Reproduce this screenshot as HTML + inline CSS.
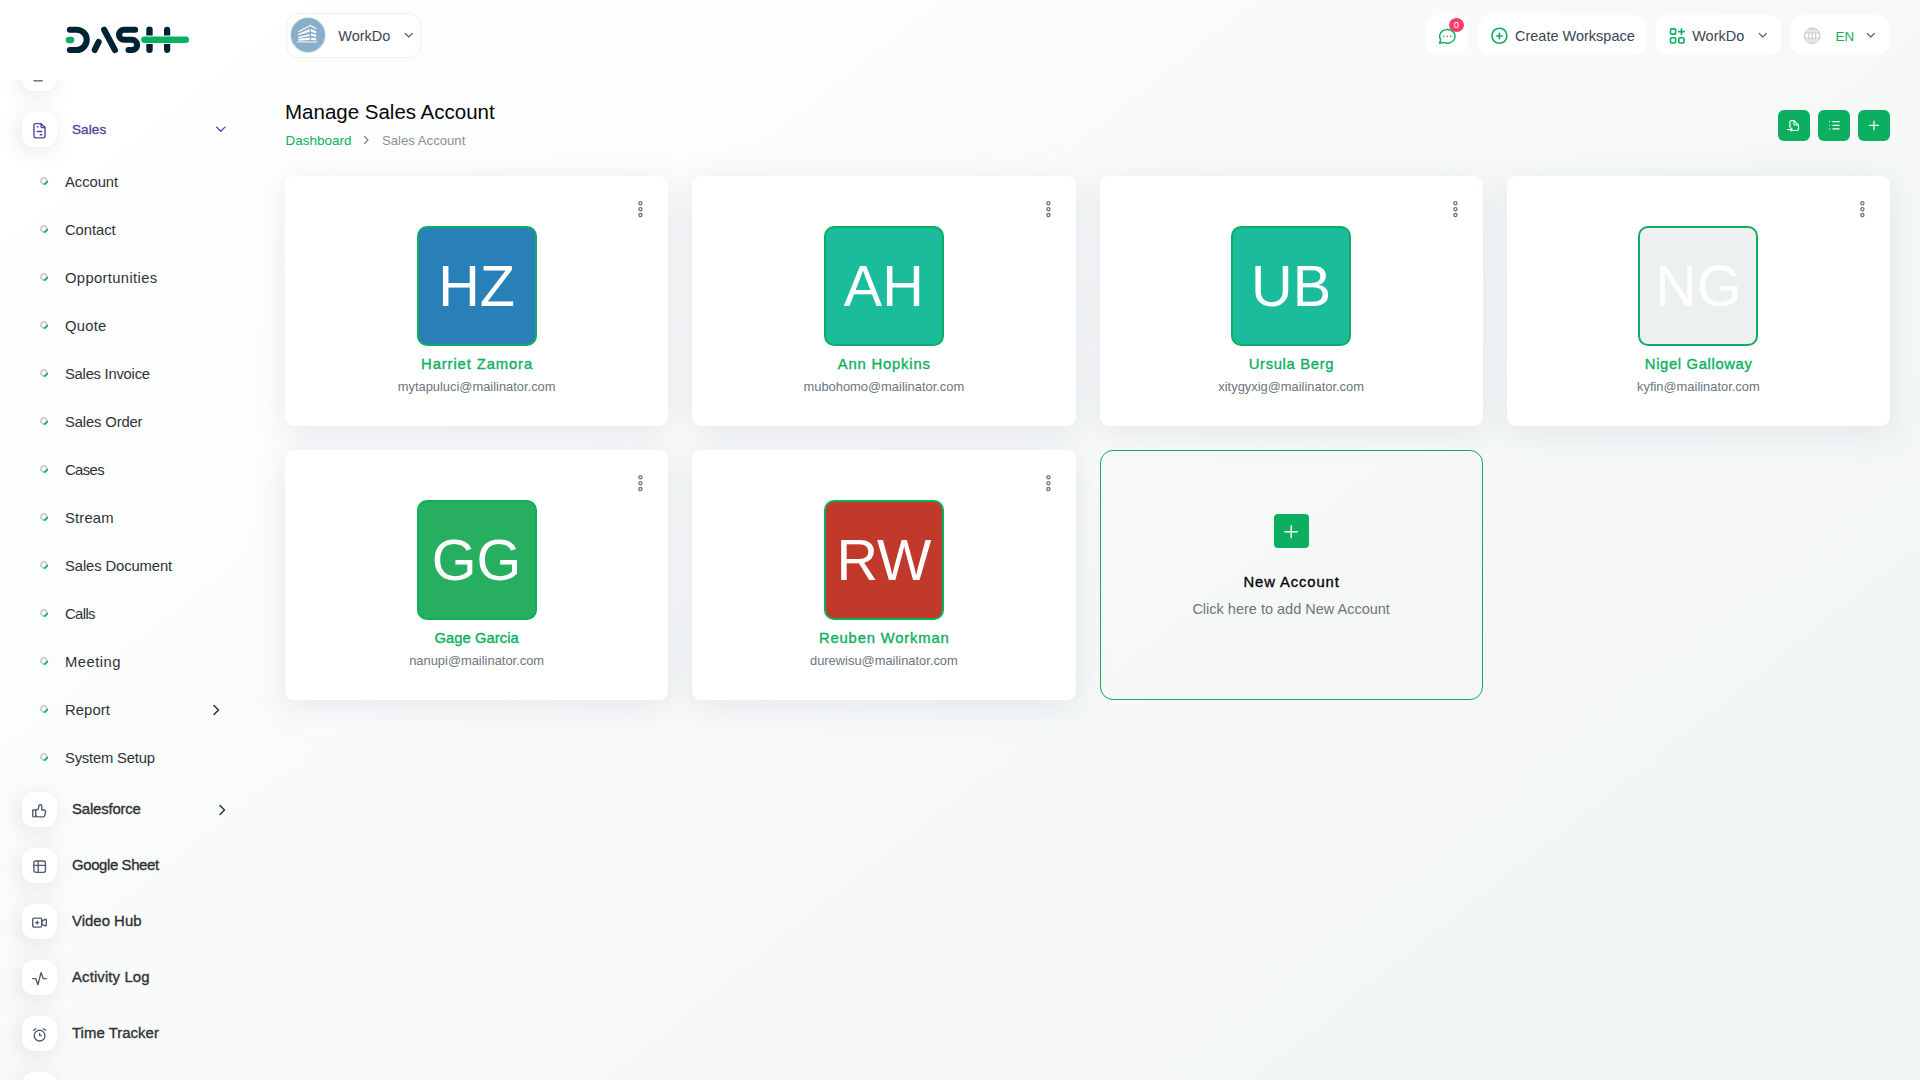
<!DOCTYPE html>
<html><head><meta charset="utf-8">
<style>
*{box-sizing:border-box;margin:0;padding:0}
html,body{width:1920px;height:1080px;overflow:hidden}
body{font-family:"Liberation Sans",sans-serif;color:#293240;position:relative;
background:linear-gradient(141.55deg,rgba(240,244,243,0) 3.46%,#f0f4f3 99.86%);background-color:#fff}
.abs{position:absolute}
.t{position:absolute;white-space:nowrap;line-height:1}
/* sidebar */
.mbox{position:absolute;left:22px;width:35px;height:35px;border-radius:12px;background:#fff;box-shadow:-3px 4px 23px rgba(0,0,0,0.1)}
.mbox svg{position:absolute;left:0;top:0}
.mtxt{position:absolute;left:72px;font-size:14.9px;letter-spacing:0.17px;-webkit-text-stroke:0.35px currentColor;color:#2e3238;white-space:nowrap;line-height:1}
.sub{position:absolute;left:65px;font-size:14.8px;color:#2e3238;white-space:nowrap;line-height:1}
.dot{position:absolute;left:40px;width:8px;height:8px;border-radius:50%;border:2px solid #cbd0d9;border-bottom-color:#0caf60;transform:rotate(-45deg)}
.logo{position:absolute;left:0;top:0;width:280px;height:80px;background:linear-gradient(141.55deg,rgba(240,244,243,0) 3.46%,#f0f4f3 99.86%) fixed,#fff}
/* header */
.hbox{position:absolute;top:15px;height:40px;background:#fff;border-radius:12px}
.htxt{position:absolute;font-size:14.5px;color:#3b4555;white-space:nowrap;line-height:1}
/* cards */
.card{position:absolute;width:383.25px;height:250px;background:#fff;border-radius:9px;box-shadow:0 6px 30px rgba(182,186,203,0.3)}
.av{position:absolute;left:131.6px;top:50px;width:120px;height:120px;border:2px solid #0caf60;border-radius:10px;overflow:hidden}
.av span{position:absolute;left:-2px;top:-2px;width:120px;height:120px;line-height:120px;text-align:center;color:#fff;font-size:57.6px}
.nm{position:absolute;left:0;width:100%;top:180.5px;text-align:center;font-size:14.8px;letter-spacing:0.9px;padding-left:0.9px;-webkit-text-stroke:0.35px currentColor;color:#0caf60;line-height:1;white-space:nowrap}
.em{position:absolute;left:0;width:100%;top:205.4px;text-align:center;font-size:12.9px;color:#6c757d;line-height:1;white-space:nowrap}
.dots{position:absolute;right:22px;top:22px}
.btn{position:absolute;top:110px;width:32px;height:31px;border-radius:6px;background:#0caf60}
.btn svg{position:absolute;left:0;top:0}
</style></head>
<body>

<!-- SIDEBAR -->
<div id="sidebar">
  <div class="mbox" style="top:56px"><svg width="35" height="35"><rect x="11.8" y="10" width="8.6" height="14.85" rx="2.2" fill="none" stroke="#525b69" stroke-width="1.4"/></svg></div>

  <div class="mbox" style="top:112px"><svg width="35" height="35" fill="none" stroke="#51459d" stroke-linecap="round" stroke-linejoin="round"><g transform="translate(8,9.28) scale(0.79)" stroke-width="1.75"><path d="M14 3v4a1 1 0 0 0 1 1h4"/><path d="M17 21h-10a2 2 0 0 1 -2 -2v-14a2 2 0 0 1 2 -2h7l5 5v11a2 2 0 0 1 -2 2z"/><path d="M9 7h1M9 13h6M13 17h2"/></g></svg></div>
  <div class="mtxt" style="top:122.9px;color:#51459d;font-size:13.5px;letter-spacing:0.1px">Sales</div>
  <svg class="abs" style="left:214px;top:124px" width="14" height="10" fill="none" stroke="#51459d" stroke-width="1.3" stroke-linecap="round" stroke-linejoin="round"><path d="M2.6 3.1l4.2 4.2l4.2 -4.2"/></svg>

  <div class="dot" style="top:176.5px"></div><div class="sub" style="top:174.5px;letter-spacing:-0.067px">Account</div>
  <div class="dot" style="top:224.5px"></div><div class="sub" style="top:222.5px;letter-spacing:-0.067px">Contact</div>
  <div class="dot" style="top:272.5px"></div><div class="sub" style="top:270.5px;letter-spacing:0.342px">Opportunities</div>
  <div class="dot" style="top:320.5px"></div><div class="sub" style="top:318.5px;letter-spacing:0.25px">Quote</div>
  <div class="dot" style="top:368.5px"></div><div class="sub" style="top:366.5px;letter-spacing:-0.25px">Sales Invoice</div>
  <div class="dot" style="top:416.5px"></div><div class="sub" style="top:414.5px;letter-spacing:-0.14px">Sales Order</div>
  <div class="dot" style="top:464.5px"></div><div class="sub" style="top:462.5px;letter-spacing:-0.6px">Cases</div>
  <div class="dot" style="top:512.5px"></div><div class="sub" style="top:510.5px;letter-spacing:0.18px">Stream</div>
  <div class="dot" style="top:560.5px"></div><div class="sub" style="top:558.5px;letter-spacing:-0.108px">Sales Document</div>
  <div class="dot" style="top:608.5px"></div><div class="sub" style="top:606.5px;letter-spacing:-0.6px">Calls</div>
  <div class="dot" style="top:656.5px"></div><div class="sub" style="top:654.5px;letter-spacing:0.467px">Meeting</div>
  <div class="dot" style="top:704.5px"></div><div class="sub" style="top:702.5px;letter-spacing:0.08px">Report</div>
  <svg class="abs" style="left:209px;top:703px" width="14" height="14" fill="none" stroke="#293240" stroke-width="1.5" stroke-linecap="round" stroke-linejoin="round"><path d="M5 2.5l4.5 4.5l-4.5 4.5"/></svg>
  <div class="dot" style="top:752.5px"></div><div class="sub" style="top:750.5px;letter-spacing:-0.2px">System Setup</div>

  <div class="mbox" style="top:792px"><svg width="35" height="35" fill="none" stroke="#525b69" stroke-width="1.35" stroke-linecap="round" stroke-linejoin="round"><g transform="translate(17.5,18.8) scale(0.755) translate(-12,-12)" stroke-width="1.8"><path d="M7 11v8a1 1 0 0 1 -1 1h-2a1 1 0 0 1 -1 -1v-7a1 1 0 0 1 1 -1h3a4 4 0 0 0 4 -4v-1a2 2 0 0 1 4 0v5h3a2 2 0 0 1 2 2l-1 5a2 3 0 0 1 -2 2h-7a3 3 0 0 1 -3 -3"/></g></svg></div>
  <div class="mtxt" style="top:802.4px;letter-spacing:-0.167px">Salesforce</div>
  <svg class="abs" style="left:215px;top:803px" width="14" height="14" fill="none" stroke="#293240" stroke-width="1.5" stroke-linecap="round" stroke-linejoin="round"><path d="M5 2.5l4.5 4.5l-4.5 4.5"/></svg>

  <div class="mbox" style="top:848px"><svg width="35" height="35" fill="none" stroke="#525b69" stroke-width="1.35" stroke-linecap="round" stroke-linejoin="round"><rect x="11.85" y="12.95" width="11.6" height="11.4" rx="2"/><path d="M11.85 17.3h11.6M16.2 12.95v11.4"/></svg></div>
  <div class="mtxt" style="top:858.4px;letter-spacing:-0.364px">Google Sheet</div>

  <div class="mbox" style="top:904px"><svg width="35" height="35" fill="none" stroke="#525b69" stroke-linecap="round" stroke-linejoin="round"><g transform="translate(17.5,18.6) scale(0.755) translate(-12,-12)" stroke-width="1.8"><path d="M15 10l4.553 -2.276a1 1 0 0 1 1.447 .894v6.764a1 1 0 0 1 -1.447 .894l-4.553 -2.276v-4z"/><path d="M3 8a2 2 0 0 1 2 -2h8a2 2 0 0 1 2 2v8a2 2 0 0 1 -2 2h-8a2 2 0 0 1 -2 -2z"/><path d="M7 12h4M9 10v4"/></g></svg></div>
  <div class="mtxt" style="top:914.4px;letter-spacing:0.025px">Video Hub</div>

  <div class="mbox" style="top:960px"><svg width="35" height="35" fill="none" stroke="#525b69" stroke-linecap="round" stroke-linejoin="round"><g transform="translate(17.5,18.65) scale(0.755) translate(-12,-12)" stroke-width="1.8"><path d="M3 12h4l3 8l4 -16l3 8h4"/></g></svg></div>
  <div class="mtxt" style="top:970.4px;letter-spacing:0.127px">Activity Log</div>

  <div class="mbox" style="top:1016px"><svg width="35" height="35" fill="none" stroke="#525b69" stroke-linecap="round" stroke-linejoin="round"><g transform="translate(17.6,18.9) scale(0.768) translate(-12,-12)" stroke-width="1.8"><path d="M5 13a7 7 0 1 0 14 0a7 7 0 1 0 -14 0"/><path d="M12 10v3h2M7 4l-2.75 2M17 4l2.75 2"/></g></svg></div>
  <div class="mtxt" style="top:1026.4px;letter-spacing:0.05px">Time Tracker</div>

  <div class="mbox" style="top:1072px"></div>
</div>

<!-- LOGO -->
<div class="logo">
  <svg width="280" height="80">
    <g fill="none" stroke-linecap="round" stroke-linejoin="round">
      <path d="M68.9 40h2.2" stroke="#0caf60" stroke-width="6.3"/>
      <path d="M69.9 29.7H76.6A10.15 10.15 0 0 1 76.6 50H69.9" stroke="#002333" stroke-width="6.1"/>
      <path d="M94.75 49.95L98.65 41.95" stroke="#002333" stroke-width="6.1"/>
      <path d="M104.15 29.7L114.95 50.1" stroke="#002333" stroke-width="6.1"/>
      <path d="M135.1 29.7H124.1A5.05 5.05 0 0 0 124.1 39.8H132A5.1 5.1 0 0 1 132 50H128.5" stroke="#002333" stroke-width="6.1"/>
      <path d="M144.4 39.8H185.8" stroke="#0caf60" stroke-width="6.4"/>
    </g>
    <g fill="#002333">
      <path d="M146.3 35.5V29.8A3.2 3.2 0 0 1 152.7 29.8V35.5Z"/>
      <path d="M146.3 44.1V49.8A3.2 3.2 0 0 0 152.7 49.8V44.1Z"/>
      <path d="M164 35.5V29.8A3.1 3.1 0 0 1 170.2 29.8V35.5Z"/>
      <path d="M164 44.1V49.8A3.1 3.1 0 0 0 170.2 49.8V44.1Z"/>
    </g>
  </svg>
</div>

<!-- HEADER -->
<div id="header">
  <div class="hbox" style="left:285.5px;top:12.5px;width:135.5px;height:45px;border:1px solid #f0f1f3"></div>
  <div class="abs" style="left:291px;top:18px;width:34px;height:34px;border-radius:50%;background:#8aaec9;box-shadow:0 0 0 1px #d5f0e0"></div>
  <svg class="abs" style="left:291px;top:18px" width="34" height="34"><g fill="#fff"><path d="M7.85 13.48L19.46 7.5L24.9 10.49" fill="none" stroke="#fff" stroke-width="1.1" stroke-linecap="round" stroke-linejoin="round"/><path d="M7.15 15.95L18.76 11.02V13.83L7.15 17.18Z"/><path d="M7.15 19.11L18.41 15.95V18.06L7.15 20.17Z"/><path d="M7.5 20.87L18.76 19.82V21.93L7.5 22.63Z"/><path d="M20 11.02L25.1 13.3V15.24L20 13.66Z"/><path d="M20 15.6L25.1 16.65V18.94L20 17.7Z"/><path d="M20 19.82L25.1 20.17V22.28L20 22.1Z"/><rect x="6.1" y="22.98" width="20.05" height="1.94" opacity="0.5"/></g></svg>
  <div class="htxt" style="left:338.3px;top:29px">WorkDo</div>
  <svg class="abs" style="left:401.9px;top:28.9px" width="14" height="12" fill="none" stroke="#5d6571" stroke-width="1.2" stroke-linecap="round" stroke-linejoin="round"><path d="M3.3 4.5l3.5 3.5l3.5 -3.5"/></svg>

  <div class="hbox" style="left:1425.6px;width:42.5px"></div>
  <svg class="abs" style="left:1437px;top:25.5px" width="22" height="22" fill="none" stroke="#0caf60" stroke-linecap="round" stroke-linejoin="round"><g transform="scale(0.86)" stroke-width="1.65"><path d="M3 20l1.3 -3.9c-2.324 -3.437 -1.426 -7.872 2.1 -10.374c3.526 -2.501 8.59 -2.296 11.845 .48c3.255 2.777 3.695 7.266 1.029 10.501c-2.666 3.235 -7.615 4.215 -11.574 2.293l-4.7 1"/><path d="M12 12v.01M8 12v.01M16 12v.01" stroke-width="1.9"/></g></svg>
  <div class="abs" style="left:1449px;top:18px;width:15px;height:14px;border-radius:50%;background:#ff3a6e;color:#fff;font-size:9.5px;line-height:14px;text-align:center">0</div>

  <div class="hbox" style="left:1477.8px;width:168.5px"></div>
  <svg class="abs" style="left:1490px;top:27px" width="18" height="18" fill="none" stroke="#0caf60" stroke-width="1.6" stroke-linecap="round"><circle cx="9.4" cy="8.75" r="7.55"/><path d="M6.6 9.05h5.6M9.35 6.2v5.6"/></svg>
  <div class="htxt" style="left:1515px;top:29px">Create Workspace</div>

  <div class="hbox" style="left:1656px;width:125px"></div>
  <svg class="abs" style="left:1668px;top:27px" width="20" height="20" fill="none" stroke="#0caf60" stroke-width="1.65" stroke-linecap="round" stroke-linejoin="round"><rect x="2.5" y="1.85" width="5.1" height="5.3" rx="1"/><rect x="2.5" y="10.7" width="5.1" height="5.3" rx="1"/><rect x="10.8" y="10.7" width="5.1" height="5.3" rx="1"/><path d="M10.75 4.6h5.5M13.5 1.85v5.5"/></svg>
  <div class="htxt" style="left:1692.2px;top:29px">WorkDo</div>
  <svg class="abs" style="left:1756.4px;top:29.1px" width="14" height="12" fill="none" stroke="#5d6571" stroke-width="1.2" stroke-linecap="round" stroke-linejoin="round"><path d="M3.3 4.5l3.5 3.5l3.5 -3.5"/></svg>

  <div class="hbox" style="left:1791px;width:98px"></div>
  <svg class="abs" style="left:1802px;top:26px" width="20" height="20" fill="none" stroke="#d0d1d3" stroke-width="1.3"><circle cx="10.2" cy="9.95" r="7.7"/><ellipse cx="10.2" cy="9.95" rx="3.5" ry="7.7"/><path d="M2.8 6.9h14.8M2.8 12.5h14.8M10.2 2.25v15.4"/></svg>
  <div class="htxt" style="left:1835.5px;top:30px;font-size:13.4px;color:#0caf60">EN</div>
  <svg class="abs" style="left:1864px;top:29px" width="14" height="12" fill="none" stroke="#5d6571" stroke-width="1.2" stroke-linecap="round" stroke-linejoin="round"><path d="M3.3 4.5l3.5 3.5l3.5 -3.5"/></svg>
</div>

<!-- MAIN -->
<div id="main">
  <div class="t" style="left:285px;top:102.1px;font-size:20.5px;color:#060606">Manage Sales Account</div>
  <div class="t" style="left:285.5px;top:134.3px;font-size:13.5px;color:#0caf60">Dashboard</div>
  <svg class="abs" style="left:360px;top:133.2px" width="12" height="14" fill="none" stroke="#7b828a" stroke-width="1.1" stroke-linecap="round" stroke-linejoin="round"><path d="M4.5 3.5l3.5 3.5l-3.5 3.5"/></svg>
  <div class="t" style="left:382px;top:134.3px;font-size:13.15px;color:#8a9099">Sales Account</div>

  <div class="btn" style="left:1778px"><svg width="32" height="31" fill="none" stroke="#fff" stroke-width="1.2" stroke-linecap="round" stroke-linejoin="round"><path d="M11.9 17.1V12.1a1.5 1.5 0 0 1 1.5 -1.5H15.9L20.5 15.2V19a1.5 1.5 0 0 1 -1.5 1.5H14.7"/><path d="M15.9 10.6v3.2a1.2 1.2 0 0 0 1.2 1.2h3.4"/><path d="M9.4 19.5H14.2M12.7 18L14.2 19.5L12.7 21"/></svg></div>
  <div class="btn" style="left:1818px"><svg width="32" height="31" fill="none" stroke="#fff" stroke-width="1.25" stroke-linecap="round"><path d="M14.9 11.7h6.2M14.9 15.35h6.2M14.9 18.9h6.2M11.6 11.7h.01M11.6 15.35h.01M11.6 18.9h.01"/></svg></div>
  <div class="btn" style="left:1858px"><svg width="32" height="31" fill="none" stroke="#fff" stroke-width="1.25" stroke-linecap="round"><path d="M11.45 15.4h9M15.95 11.1v8.6"/></svg></div>
  <div class="card" style="left:285px;top:176px">
    <svg class="dots" width="12" height="22" fill="none" stroke="#6c757d" stroke-width="1.3"><circle cx="6.4" cy="5.2" r="1.6"/><circle cx="6.4" cy="11.2" r="1.6"/><circle cx="6.4" cy="17.1" r="1.6"/></svg>
    <div class="av" style="background:#2980b9"><span>HZ</span></div>
    <div class="nm" style="letter-spacing:0.89px;padding-left:0.89px">Harriet Zamora</div>
    <div class="em">mytapuluci@mailinator.com</div>
  </div>
  <div class="card" style="left:692.25px;top:176px">
    <svg class="dots" width="12" height="22" fill="none" stroke="#6c757d" stroke-width="1.3"><circle cx="6.4" cy="5.2" r="1.6"/><circle cx="6.4" cy="11.2" r="1.6"/><circle cx="6.4" cy="17.1" r="1.6"/></svg>
    <div class="av" style="background:#1abc9c"><span>AH</span></div>
    <div class="nm" style="letter-spacing:0.81px;padding-left:0.81px">Ann Hopkins</div>
    <div class="em">mubohomo@mailinator.com</div>
  </div>
  <div class="card" style="left:1099.5px;top:176px">
    <svg class="dots" width="12" height="22" fill="none" stroke="#6c757d" stroke-width="1.3"><circle cx="6.4" cy="5.2" r="1.6"/><circle cx="6.4" cy="11.2" r="1.6"/><circle cx="6.4" cy="17.1" r="1.6"/></svg>
    <div class="av" style="background:#1abc9c"><span>UB</span></div>
    <div class="nm" style="letter-spacing:0.67px;padding-left:0.67px">Ursula Berg</div>
    <div class="em">xitygyxig@mailinator.com</div>
  </div>
  <div class="card" style="left:1506.75px;top:176px">
    <svg class="dots" width="12" height="22" fill="none" stroke="#6c757d" stroke-width="1.3"><circle cx="6.4" cy="5.2" r="1.6"/><circle cx="6.4" cy="11.2" r="1.6"/><circle cx="6.4" cy="17.1" r="1.6"/></svg>
    <div class="av" style="background:#ecf0f1"><span>NG</span></div>
    <div class="nm" style="letter-spacing:0.64px;padding-left:0.64px">Nigel Galloway</div>
    <div class="em">kyfin@mailinator.com</div>
  </div>
  <div class="card" style="left:285px;top:450px">
    <svg class="dots" width="12" height="22" fill="none" stroke="#6c757d" stroke-width="1.3"><circle cx="6.4" cy="5.2" r="1.6"/><circle cx="6.4" cy="11.2" r="1.6"/><circle cx="6.4" cy="17.1" r="1.6"/></svg>
    <div class="av" style="background:#27ae60"><span>GG</span></div>
    <div class="nm" style="letter-spacing:0.03px;padding-left:0.03px">Gage Garcia</div>
    <div class="em">nanupi@mailinator.com</div>
  </div>
  <div class="card" style="left:692.25px;top:450px">
    <svg class="dots" width="12" height="22" fill="none" stroke="#6c757d" stroke-width="1.3"><circle cx="6.4" cy="5.2" r="1.6"/><circle cx="6.4" cy="11.2" r="1.6"/><circle cx="6.4" cy="17.1" r="1.6"/></svg>
    <div class="av" style="background:#c0392b"><span>RW</span></div>
    <div class="nm" style="letter-spacing:0.84px;padding-left:0.84px">Reuben Workman</div>
    <div class="em">durewisu@mailinator.com</div>
  </div>
  <div class="abs" style="left:1099.5px;top:450px;width:383.25px;height:250px;border:1px solid #0caf60;border-radius:13px"></div>
  <div class="abs" style="left:1274px;top:514px;width:34.5px;height:34px;border-radius:4px;background:#0caf60"></div>
  <svg class="abs" style="left:1274px;top:514px" width="35" height="34" fill="none" stroke="#fff" stroke-width="1.4" stroke-linecap="round"><path d="M10.9 17.7h12.4M17.2 11.6v12"/></svg>
  <div class="t" style="left:1099.5px;width:383.25px;text-align:center;top:574.5px;font-size:14.8px;letter-spacing:0.9px;padding-left:0.9px;-webkit-text-stroke:0.35px #060606;color:#060606">New Account</div>
  <div class="t" style="left:1099.5px;width:383.25px;text-align:center;top:602.3px;font-size:14.5px;color:#6c757d">Click here to add New Account</div>
</div>

</body></html>
